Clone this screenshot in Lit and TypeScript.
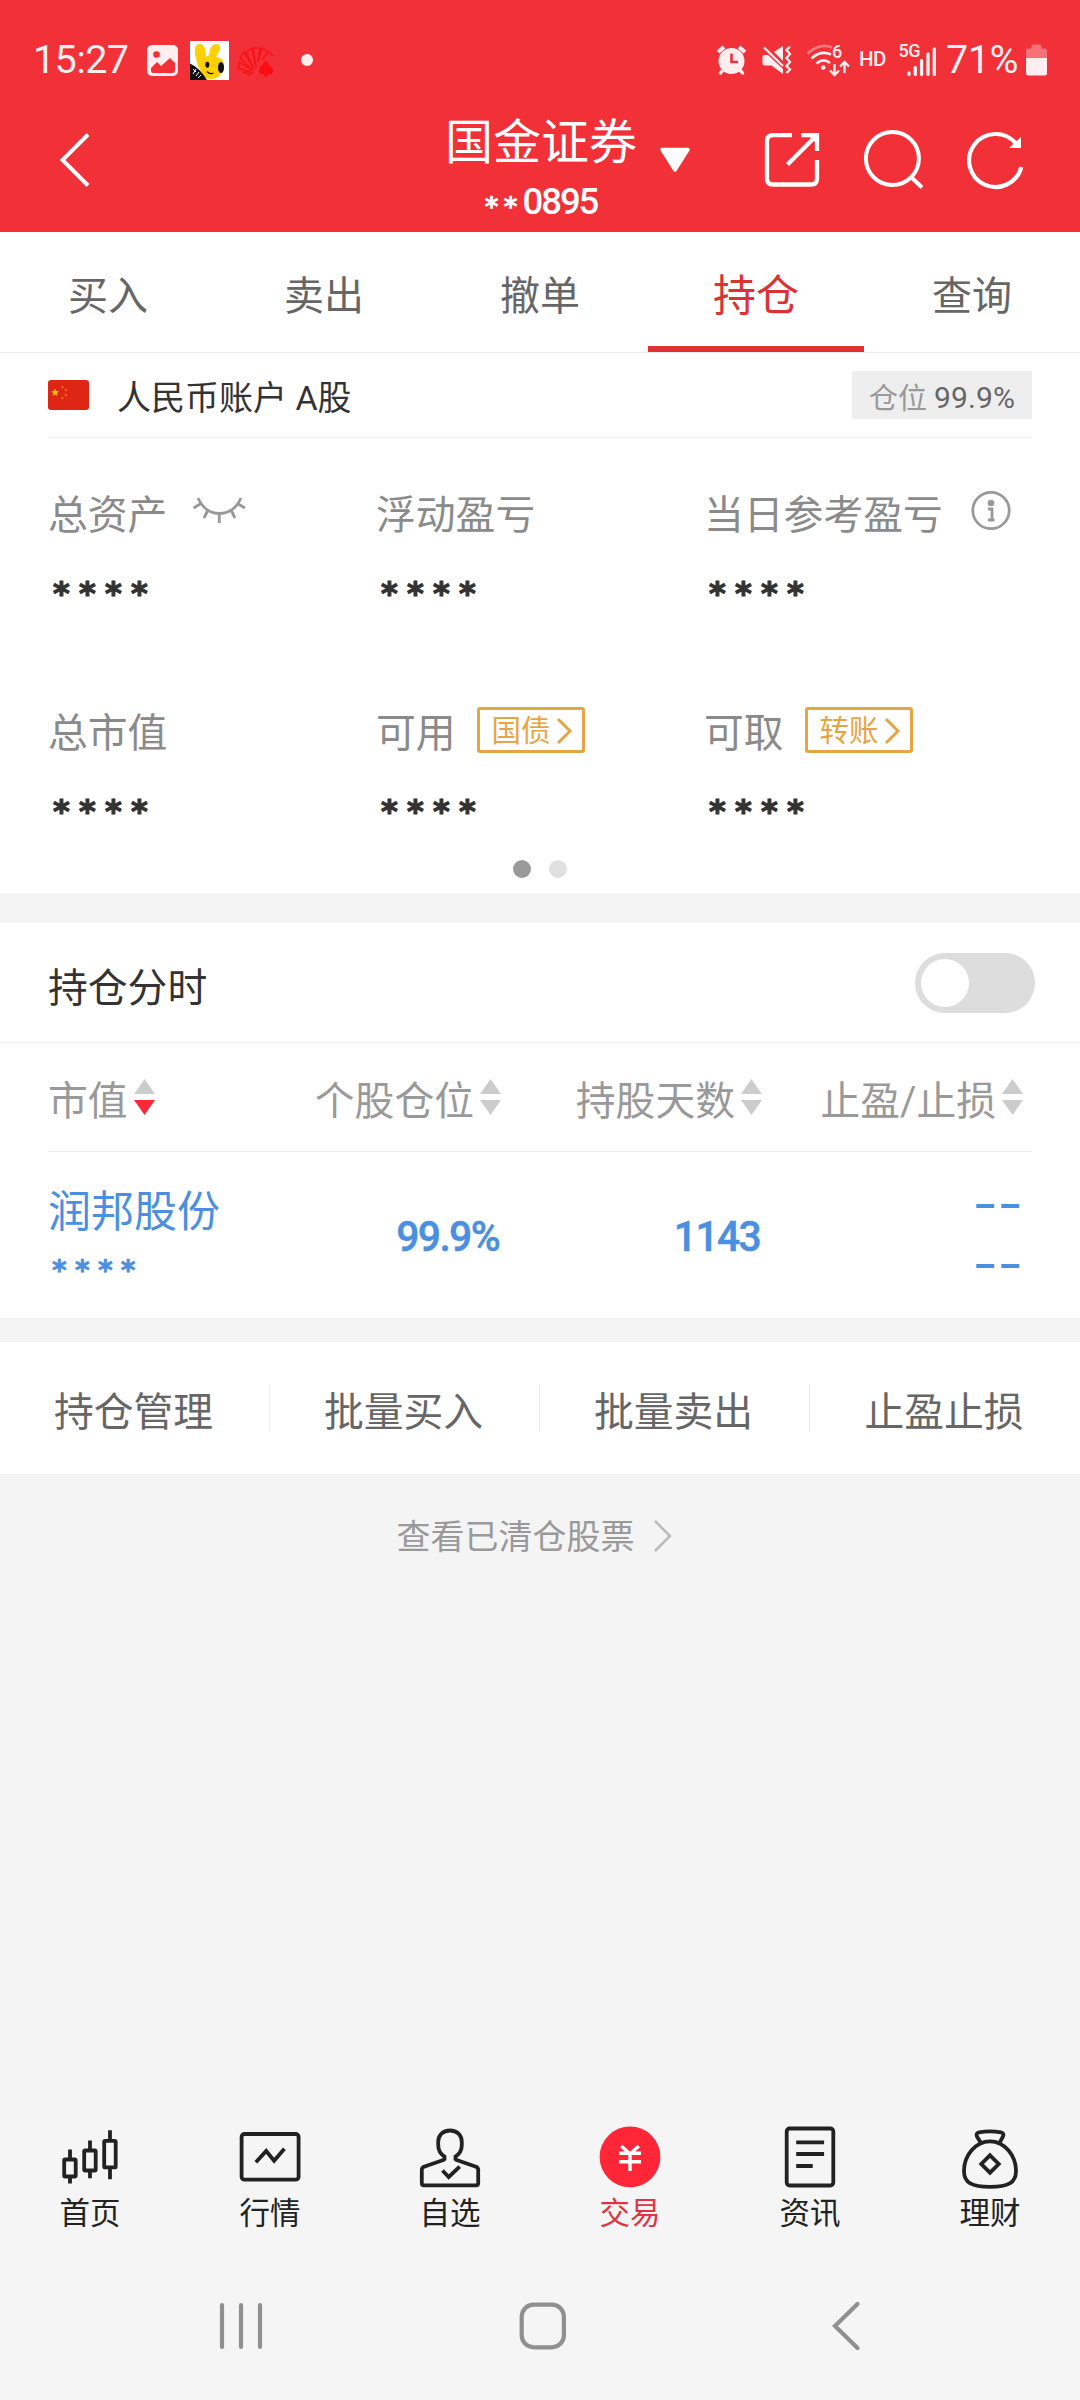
import { LitElement, html, svg, css, type TemplateResult, type SVGTemplateResult } from "lit";
import { customElement, property } from "lit/decorators.js";

const TABS = ["买入", "卖出", "撤单", "持仓", "查询"];
const BATCH = ["持仓管理", "批量买入", "批量卖出", "止盈止损"];
const COLUMNS = ["市值", "个股仓位", "持股天数", "止盈/止损"];

const box = (viewBox: string, content: SVGTemplateResult) => {
  const [, , w, h] = viewBox.split(" ");
  return html`<svg viewBox=${viewBox} width=${w} height=${h}>${content}</svg>`;
};

@customElement("status-strip")
class StatusStrip extends LitElement {
  static styles = css`
    :host { display: grid; height: 80px; color: #ffeef0;
      grid-template-columns: 143px 43px 47px 50px 1fr 41px 48px 54px 38px 50px 84px 54px; }
    svg { display: block; }
    .time, .pct { font-size: 39.5px; line-height: 120px; height: 80px; white-space: nowrap; }
    .time { padding-left: 33px; letter-spacing: -0.6px; }
    .pct { padding-left: 4px; letter-spacing: -0.5px; }
    .hd { font-size: 20.500px; font-weight: 500; line-height: 119px; height: 80px; padding-left: 5px; letter-spacing: -0.600px; }
    .small { font-family: Roboto, sans-serif; font-weight: 500; font-size: 18px; }
  `;
  render() {
    return html`
      <div class="time">15:27</div>
      ${box("143 0 43 80", svg`
        <rect x="147" y="45" width="31" height="31" rx="5" fill="#ffeef0"/>
        <circle cx="156.5" cy="54.5" r="3.3" fill="#f13038"/>
        <path d="M151 68 L157 62 L161 66 L170 58 L175 63 V70 Q175 73 172 73 H153 Q151 73 151 70Z" fill="#f13038"/>`)}
      ${box("186 0 47 80", svg`
        <rect x="190" y="41" width="39" height="39" fill="#fff"/>
        <path d="M200.5 44 C194 43 194 51 196 58 L198 66 L205 78 Q215 81 220 75 Q226 70 223 61 Q220 57 216 57 L220 50 Q221 44 216 44 Q210 44 209 55 L206 57 Q206 45 200.5 44Z" fill="#ffd000"/>
        <ellipse cx="207.3" cy="64.8" rx="2" ry="3" fill="#111"/>
        <ellipse cx="221" cy="67.5" rx="3" ry="5.6" fill="#111"/>
        <path d="M207 71.5 Q210 75 213.5 73" fill="none" stroke="#111" stroke-width="1.2"/>
        <path d="M190 63.5 Q200 68 207 80 H190Z" fill="#111"/>
        <path d="M193 69 l3 3 m0 -3 l-3 5 m6 -2 l-3 4 m5 -1 l-3 3" fill="none" stroke="#fff" stroke-width="1"/>`)}
      ${box("233 0 50 80", svg`
        <g fill="none" stroke="#fb1217" stroke-width="1.5" stroke-linejoin="round">
          <path d="M253 73 L238 68 L239 62 L252 70 L240 58 L244 52 L254 69 L246 52 L252 48 L256 67 L253 48 H260 L258 62 L262 48 L268 52 L262 60 M268 51 L273 56 M243 72 L251 75"/>
        </g>
        <path d="M266 60 C263 65 259 67 259 71 C259 75 264 75 265 73 L264 76.500 H268 L267 73 C269 75 273 75 273 71 C273 67 268 65 266 60Z" fill="#fb0d12"/>`)}
      ${box("283 0 50 80", svg`<circle cx="307" cy="60" r="6" fill="#ffeef0"/>`)}
      ${box("711 0 41 80", svg`
        <circle cx="731.5" cy="61" r="13" fill="#ffeef0"/>
        <path d="M731.500 53.500 V62 H738" fill="none" stroke="#f13038" stroke-width="2.600"/>
        <path d="M718 52 L724 47 M745 52 L739 47" stroke="#ffeef0" stroke-width="4" stroke-linecap="butt"/>
        <path d="M723 70 L720.500 73 M740 70 L742.500 73" stroke="#ffeef0" stroke-width="3.500" stroke-linecap="round"/>`)}
      ${box("752 0 48 80", svg`
        <path d="M764.500 55 H768 L783 69 V74 L771.500 65.500 H764.500 Q762.500 65.500 762.500 63.500 V57 Q762.500 55 764.500 55Z" fill="#ffeef0"/>
        <path d="M774 52 L783 46 V61Z" fill="#ffeef0"/>
        <path d="M764 47.500 L783 66" stroke="#ffeef0" stroke-width="2.200"/>
        <path d="M790 46.500 L786.500 50 L790 54 L786.500 58 L790 62 L786.500 66 L790 69.500 L786.500 73" fill="none" stroke="#ffeef0" stroke-width="2.300"/>`)}
      ${box("800 0 54 80", svg`
        <g fill="none" stroke="#ffeef0" stroke-width="2.800">
          <path d="M807.500 53.500 Q820 42.500 832 47.500" opacity=".4"/>
          <path d="M811.500 58.500 Q820.500 50 831 54.500"/>
          <path d="M816.500 63.500 Q823 57.500 830 63"/>
          <path d="M834.500 64 V74 M830 70.500 L834.500 75 L839 70.500 M844.500 73 V62 M840 66.500 L844.500 62 L849 66.500" stroke-width="2.300"/>
        </g>
        <circle cx="823.200" cy="67.500" r="2.300" fill="#ffeef0"/>
        <text class="small" x="832" y="58" fill="#ffeef0">6</text>`)}
      <div class="hd">HD</div>
      ${box("892 0 50 80", svg`
        <text class="small" x="898.500" y="56.500" fill="#ffeef0" textLength="22">5G</text>
        <path d="M909 73 V74.500 M915.300 67.500 V74.500 M921.600 60.500 V74.500 M928 54 V74.500 M934.300 49 V74.500" stroke="#ffeef0" stroke-width="3.300" stroke-linecap="round"/>`)}
      <div class="pct">71%</div>
      ${box("1026 0 54 80", svg`
        <path d="M1026 58 V51 Q1026 48.500 1028.500 48.500 H1031.500 V46 Q1031.500 44.500 1033 44.500 H1040 Q1041.500 44.500 1041.500 46 V48.500 H1044.500 Q1047 48.500 1047 51 V58Z" fill="#ffeef0" opacity=".35"/>
        <path d="M1026 58 H1047 V73 Q1047 75.500 1044.500 75.500 H1028.500 Q1026 75.500 1026 73Z" fill="#ffeef0"/>`)}
    `;
  }
}

@customElement("title-bar")
class TitleBar extends LitElement {
  static styles = css`
    :host { display: grid; height: 152px; color: #fff; grid-template-columns: 440px 202px 103px 100px 100px 1fr; }
    svg { display: block; }
    .title { display: flex; flex-direction: column; align-items: center; white-space: nowrap; }
    .broker { font-size: 48px; line-height: 62px; margin-top: 32px; }
    .account { display: flex; font-size: 36.500px; font-weight: 500; line-height: 44px; margin-top: 6px; letter-spacing: -2.100px; }
    .mask { font-family: "DejaVu Sans", sans-serif; font-weight: 700; font-size: 26px; letter-spacing: 5.300px; padding-top: 5px; -webkit-text-stroke: .6px #fff; }
  `;
  render() {
    return html`
      ${box("0 80 440 152", svg`<path d="M88 134.500 L62.500 160 L88 185.500" fill="none" stroke="#fff" stroke-width="4"/>`)}
      <div class="title">
        <div class="broker">国金证券</div>
        <div class="account"><span class="mask">**</span><span>0895</span></div>
      </div>
      ${box("642 80 103 152", svg`<path d="M662 149.500 H688 L675 170Z" fill="#fff" stroke="#fff" stroke-width="3.500" stroke-linejoin="round"/>`)}
      ${box("745 80 100 152", svg`
        <path d="M792 135.200 H773 Q767 135.200 767 141.200 V178.500 Q767 184.500 773 184.500 H811 Q817 184.500 817 178.500 V160" fill="none" stroke="#fff" stroke-width="4.300"/>
        <path d="M787.500 164.500 L814.500 137.500 M801 135.200 H817 V151" fill="none" stroke="#fff" stroke-width="4.300"/>
        <path d="M808 135 H817 V144Z" fill="#fff"/>`)}
      ${box("845 80 100 152", svg`
        <circle cx="892.400" cy="158.500" r="26.500" fill="none" stroke="#fff" stroke-width="4"/>
        <path d="M911 177 L922 187.500" stroke="#fff" stroke-width="4"/>`)}
      ${box("945 80 135 152", svg`
        <path d="M1015.500 143 A26.500 26.500 0 1 0 1021.300 167" fill="none" stroke="#fff" stroke-width="4.200"/>
        <path d="M1021 137 V148 H1009Z" fill="#fff"/>`)}
    `;
  }
}

@customElement("trade-tabs")
class TradeTabs extends LitElement {
  static styles = css`
    :host { display: grid; grid-template-columns: repeat(5, 1fr); height: 120px; border-bottom: 1px solid #ececec; background: #fff; }
    .tab { text-align: center; font-size: 40px; line-height: 129px; height: 120px; box-sizing: border-box; color: #666; }
    .active { font-size: 43px; color: #d93333; border-bottom: 6px solid #e03232; }
  `;
  render() {
    return TABS.map((t) => html`<div class="tab ${t === "持仓" ? "active" : ""}">${t}</div>`);
  }
}

@customElement("asset-cell")
class AssetCell extends LitElement {
  @property() label = "";
  @property() tag = "";
  static styles = css`
    :host { display: block; }
    .label { display: flex; height: 56px; line-height: 56px; font-size: 39.800px; color: #8a8a8a; white-space: nowrap; }
    .value { margin-top: 4px; padding: 0 0 2px 5px; font: 700 32px/90px "DejaVu Sans", sans-serif; letter-spacing: 9.300px; color: #333; -webkit-text-stroke: 1.200px #333; }
    .tag { display: flex; box-sizing: border-box; width: 108px; height: 46px; margin: 1px 0 0 21px; border: 3px solid #e6a545; border-radius: 3px;
      font-size: 29.500px; line-height: 43px; color: #e6a545; padding-left: 12px; }
    .tag svg { margin: 7px 0 0 5px; }
  `;
  render() {
    return html`
      <div class="label">${this.label}<slot></slot>${this.tag
        ? html`<span class="tag">${this.tag}${box("0 0 18 28", svg`<path d="M2 2 L14 14 L2 26" fill="none" stroke="#e6a545" stroke-width="3"/>`)}</span>`
        : ""}</div>
      <div class="value">****</div>
    `;
  }
}

@customElement("asset-panel")
class AssetPanel extends LitElement {
  static styles = css`
    :host { display: block; height: 540px; background: #fff; }
    svg { display: block; }
    .account { display: flex; align-items: center; height: 84px; margin: 0 48px; border-bottom: 1px solid #ececec; }
    .name { margin-left: 28px; font-size: 34px; color: #333; }
    .ratio { display: flex; align-items: center; margin-left: auto; width: 162px; box-sizing: border-box; width: 180px; padding-left: 17px; height: 48px; background: #eee; font-size: 29px; color: #999; white-space: nowrap; }
    .ratio span { padding-top: 2px; }
    .ratio b { font-weight: 400; font-size: 30px; color: #666; margin-left: 7px; padding-top: 4px; letter-spacing: .1px; }
    .grid { display: grid; grid-template-columns: repeat(3, 328px); row-gap: 66px; padding: 50px 48px 0; }
    .dots { display: flex; gap: 18px; justify-content: center; padding-top: 2px; }
    .dots i { width: 18px; height: 18px; border-radius: 50%; background: #e0e0e0; }
    .dots i.on { background: #999; }
    .eye { margin: 8px 0 0 25px; }
    .info { margin: 1px 0 0 27px; }
  `;
  render() {
    return html`
      <div class="account">
        <svg width="41" height="30" viewBox="0 0 41 30">
          <rect width="41" height="30" rx="3" fill="#df2513"/>
          <path d="M7 8.500 l1.200 2.600 2.700 .2 -2 1.900 .7 2.700 -2.600 -1.500 -2.400 1.500 .6 -2.700 -2 -1.900 2.700 -.2z" fill="#fdc300"/>
          <g fill="#ee6a1c"><circle cx="14.500" cy="7" r="1.200"/><circle cx="17.800" cy="10" r="1.200"/><circle cx="17.800" cy="15" r="1.200"/><circle cx="14.500" cy="18" r="1.200"/></g>
        </svg>
        <span class="name">人民币账户 A股</span>
        <div class="ratio"><span>仓位</span><b>99.9%</b></div>
      </div>
      <div class="grid">
        <asset-cell label="总资产">
          <svg class="eye" width="54" height="30" viewBox="192 496 54 30"><g fill="none" stroke="#999" stroke-width="2.800">
            <path d="M198 498 C203 509 210 513.500 219.300 513.500 C228 513.500 236 509 241 498"/>
            <path d="M201 503.500 L193.500 508 M237.500 503.500 L245 508 M207.500 511 L204 518 M231.500 511 L235 518 M219.300 514 V523"/></g></svg>
        </asset-cell>
        <asset-cell label="浮动盈亏"></asset-cell>
        <asset-cell label="当日参考盈亏">
          <svg class="info" width="42" height="42" viewBox="0 0 42 42">
            <circle cx="21" cy="21.500" r="18.200" fill="none" stroke="#999" stroke-width="2.800"/>
            <circle cx="21" cy="14" r="3.300" fill="#999"/>
            <path d="M18 20 H22 V31 M18 31 H24.500" fill="none" stroke="#999" stroke-width="2.800"/></svg>
        </asset-cell>
        <asset-cell label="总市值"></asset-cell>
        <asset-cell label="可用" tag="国债"></asset-cell>
        <asset-cell label="可取" tag="转账"></asset-cell>
      </div>
      <div class="dots"><i class="on"></i><i></i></div>
    `;
  }
}

@customElement("position-panel")
class PositionPanel extends LitElement {
  static styles = css`
    :host { display: block; height: 395px; background: #fff; color: #333; }
    svg { display: block; }
    .chart { display: flex; align-items: center; justify-content: space-between; height: 119px; padding: 0 45px 0 48px; border-bottom: 1px solid #ececec; font-size: 39.800px; }
    .chart span { padding-top: 3px; }
    .toggle { box-sizing: border-box; width: 120px; height: 60px; border-radius: 30px; background: #ddd; padding: 6px; }
    .knob { width: 48px; height: 48px; border-radius: 50%; background: #fff; }
    .head, .row { display: grid; grid-template-columns: 192px 261px 261px 261px; margin: 0 48px; }
    .head { height: 108px; border-bottom: 1px solid #ececec; color: #999; font-size: 39.800px; line-height: 117px; }
    .col { display: flex; justify-content: flex-end; gap: 6px; white-space: nowrap; }
    .col:first-child { justify-content: flex-start; }
    .col svg { margin-top: 36px; }
    .row { color: #4a8fe0; height: 166px; }
    .stock { font-size: 43px; line-height: 61px; padding-top: 30px; white-space: nowrap; }
    .mask { font: 700 28px/55px "DejaVu Sans", sans-serif; letter-spacing: 8.300px; padding-left: 4px; -webkit-text-stroke: .7px #4a8fe0; }
    .num { text-align: right; font-size: 42.500px; font-weight: 500; line-height: 169px; letter-spacing: -1.700px; transform: scaleX(.96); transform-origin: 100% 50%; -webkit-text-stroke: .5px #4a8fe0; padding-right: 2px; }
    .none { font: 400 68px/60px "DejaVu Sans", sans-serif; text-align: right; padding-top: 21px; letter-spacing: .500px; }
    .none div { transform: scaleY(.72); }
  `;
  render() {
    return html`
      <div class="chart"><span>持仓分时</span><div class="toggle"><div class="knob"></div></div></div>
      <div class="head">
        ${COLUMNS.map((c, i) => html`<div class="col">${c}
          <svg width="21" height="36" viewBox="0 0 21 36"><path d="M10.500 0 L21 15 H0Z" fill="#ccc"/><path d="M0 21 H21 L10.500 36Z" fill=${i ? "#ccc" : "#fd2838"}/></svg></div>`)}
      </div>
      <div class="row">
        <div><div class="stock">润邦股份</div><div class="mask">****</div></div>
        <div class="num">99.9%</div>
        <div class="num">1143</div>
        <div class="none"><div>--</div><div>--</div></div>
      </div>
    `;
  }
}

const ink = (c: SVGTemplateResult) => svg`<g fill="none" stroke="#222" stroke-width="3.800">${c}</g>`;

const NAV: { name: string; icon: SVGTemplateResult; on?: boolean }[] = [
  { name: "首页", icon: ink(svg`
    <rect x="14.200" y="39.500" width="11.500" height="17" rx="1"/><path d="M20 29.500 V39 M20 57 V63.500"/>
    <rect x="34.200" y="30.500" width="11.500" height="20" rx="1"/><path d="M40 20.500 V30 M40 51 V58.300"/>
    <rect x="54.200" y="20.900" width="11.500" height="26.500" rx="1"/><path d="M60 10.200 V20 M60 48 V59.300"/>`) },
  { name: "行情", icon: ink(svg`<rect x="11.600" y="14" width="57" height="45.700" rx="3"/><path d="M25.900 42.300 L36.200 31 L44.100 40.700 L54.400 28.700"/>`) },
  { name: "自选", icon: ink(svg`
    <path d="M34.500 40.500 V36.500 C30.500 34 28.200 29.500 28.200 25 V22 C28.200 15 33 10.500 40 10.500 C47 10.500 51.800 15 51.800 22 V25 C51.800 29.500 49.500 34 45.500 36.500 V40.500"/>
    <path d="M34.800 39.500 L14 46.800 Q11.800 47.800 11.800 50 V63 Q11.800 65.300 14 65.300 H66 Q68.200 65.300 68.200 63 V50 Q68.200 47.800 66 46.800 L45.200 39.500"/>
    <path d="M32.500 50.500 L38.700 57 L49.700 46.700"/>`) },
  { name: "交易", on: true, icon: svg`
    <circle cx="40" cy="36.900" r="30.400" fill="#ff2638"/>
    <path d="M31.200 26 L40 34 L48.800 26 M29 33.300 H51 M29 41.700 H51 M40 33 V51" fill="none" stroke="#fff" stroke-width="3.400"/>` },
  { name: "资讯", icon: ink(svg`<rect x="16.700" y="8.500" width="46.600" height="57" rx="3"/><path d="M26.200 22.300 H54.100 M26.200 34 H54.100 M26.200 46 H42.700"/>`) },
  { name: "理财", icon: ink(svg`
    <path d="M40 21.300 C25 21.300 14 36 14 51 C14 63 22 66.900 40 66.900 C58 66.900 66 63 66 51 C66 36 55 21.300 40 21.300Z"/>
    <path d="M31 23 L27 16.500 Q25.500 13 29 12.300 Q40 10.500 51 12.300 Q54.500 13 53 16.500 L49.500 23"/>
    <path d="M40 35.300 L48.700 44 L40 52.700 L31.300 44Z"/>`) },
];

@customElement("bottom-nav")
class BottomNav extends LitElement {
  static styles = css`
    :host { display: grid; grid-template-columns: repeat(6, 1fr); height: 140px; color: #222; background: #f5f5f5; }
    .item { display: flex; flex-direction: column; align-items: center; font-size: 30.500px; line-height: 30px; }
    .item span { margin-top: -1px; }
    .on { color: #e03343; }
    svg { display: block; }
  `;
  render(): TemplateResult[] {
    return NAV.map((n) => html`<div class="item ${n.on ? "on" : ""}">${box("0 0 80 80", n.icon)}<span>${n.name}</span></div>`);
  }
}

@customElement("system-keys")
class SystemKeys extends LitElement {
  static styles = css`
    :host { display: flex; padding-left: 201px; gap: 219px; height: 140px; align-items: center; background: #f5f5f5; }
  `;
  render() {
    const s = (c: SVGTemplateResult) => svg`<g fill="none" stroke="#909090" stroke-width="4.200" stroke-linecap="round">${c}</g>`;
    return html`
      ${box("201 2290 80 80", s(svg`<path d="M222 2305 V2347 M241 2305 V2347 M260 2305 V2347"/>`))}
      ${box("500 2290 85 80", s(svg`<rect x="521.700" y="2304.700" width="42.200" height="42.600" rx="12"/>`))}
      ${box("804 2290 80 80", s(svg`<path d="M857.500 2304 L835 2326 L857.500 2348"/>`))}
    `;
  }
}

@customElement("app-root")
class AppRoot extends LitElement {
  static styles = css`
    :host { display: flex; flex-direction: column; width: 1080px; height: 2400px; background: #f4f4f4; overflow: hidden;
      font-family: Roboto, "Noto Sans CJK SC", sans-serif; }
    .top { background: #f13038; }
    position-panel { margin-top: 30px; }
    .batch { display: grid; grid-template-columns: repeat(4, 1fr); background: #fff; height: 132px; margin-top: 24px; }
    .batch div { display: flex; align-items: center; justify-content: center; font-size: 39.800px; height: 48px; margin: 42px 0; line-height: 48px; color: #666; border-right: 1px solid #ececec; }
    .batch div:last-child { border: 0; }
    .batch span { padding-top: 9px; margin-right: 2px; }
    .cleared { display: flex; justify-content: center; gap: 18px; margin-top: 40px; padding-right: 11px; font-size: 34px; line-height: 47px; color: #999; }
    .cleared svg { margin-top: 5px; }
    bottom-nav { margin-top: auto; }
  `;
  render() {
    return html`
      <div class="top"><status-strip></status-strip><title-bar></title-bar></div>
      <trade-tabs></trade-tabs>
      <asset-panel></asset-panel>
      <position-panel></position-panel>
      <div class="batch">${BATCH.map((b) => html`<div><span>${b}</span></div>`)}</div>
      <div class="cleared">查看已清仓股票${box("0 0 20 34", svg`<path d="M2 2 L17 17 L2 32" fill="none" stroke="#bbb" stroke-width="2.500"/>`)}</div>
      <bottom-nav></bottom-nav>
      <system-keys></system-keys>
    `;
  }
}
